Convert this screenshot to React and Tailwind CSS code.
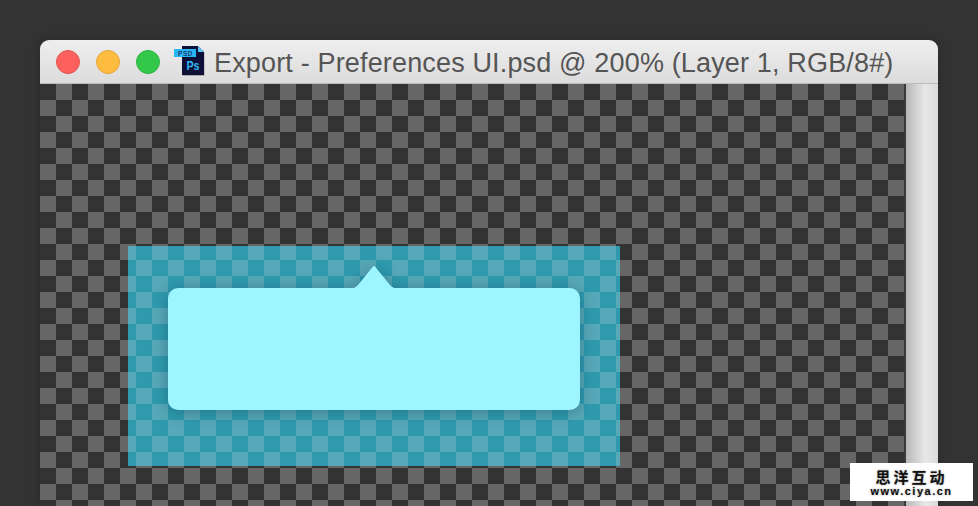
import React from "react";

function PsIcon() {
  return (
    <svg width="32" height="32" viewBox="0 0 32 32" className="shrink-0">
      <path d="M8.5 2H25L30.5 8V31H8.5Z" fill="#000" opacity="0.25" />
      <path d="M8 1H24L30 7V30H8Z" fill="#0f1038" />
      <path d="M24 1L30 7H24Z" fill="#5cc8f5" />
      <rect x="0" y="4" width="22" height="8" fill="#29b6f6" />
      <text x="4" y="10.5" fontFamily="'Liberation Mono', monospace" fontSize="7.5" letterSpacing="0.4" fill="#0f1038">PSD</text>
      <text x="12.5" y="25" fontFamily="'Liberation Sans', sans-serif" fontSize="13.5" fontWeight="700" textLength="13" lengthAdjust="spacingAndGlyphs" fill="#35b8f4">Ps</text>
    </svg>
  );
}

function Dot({ className }) {
  return <div className={`w-6 h-6 rounded-full border ${className}`} />;
}

export default function App() {
  return (
    <div className="relative w-[978px] h-[506px] overflow-hidden bg-[#333333] pt-10 pl-10 font-['Liberation_Sans',sans-serif]">
      <div className="w-[898px] h-[466px] flex flex-col rounded-t-[9px] overflow-hidden shadow-[0_0_10px_rgba(0,0,0,0.25)]">
        {/* title bar */}
        <div className="h-11 shrink-0 flex items-center pl-4 bg-gradient-to-b from-[#eeeeee] to-[#dcdcdc] border-b border-[#b8b8b8]">
          <div className="flex gap-4">
            <Dot className="bg-[#fc615d] border-[#e5534f]" />
            <Dot className="bg-[#fdbc40] border-[#e5a535]" />
            <Dot className="bg-[#34c84a] border-[#2db340]" />
          </div>
          <div className="ml-[14px] mt-[-2px]">
            <PsIcon />
          </div>
          <span className="ml-2 mt-[3px] text-[27px] leading-none tracking-[0.16px] whitespace-nowrap text-[#555555]">
            Export - Preferences UI.psd @ 200% (Layer 1, RGB/8#)
          </span>
        </div>

        <div className="flex-1 flex min-h-0">
          {/* canvas */}
          <div className="flex-1 bg-[conic-gradient(#666666_25%,#333333_0_50%,#666666_0_75%,#333333_0)] bg-[length:32px_32px] pl-[88px] pt-[162px]">
            <div className="w-[492px] h-[220px] overflow-hidden bg-[conic-gradient(#57a8b8_25%,#2f9aae_0_50%,#57a8b8_0_75%,#2f9aae_0)] bg-[length:32px_32px] bg-[position:8px_30px] pl-10 pt-[19px]">
              <div className="relative w-[412px] drop-shadow-[0_2px_8px_rgba(10,60,80,0.4)]">
                <svg width="60" height="24" viewBox="0 0 60 24" className="block ml-[176px]">
                  <path d="M4 24C9 24 11.5 22.5 14 20L29 1.5Q30 0.7 31 1.5L46 20C48.5 22.5 51 24 56 24Z" fill="#9cf5ff" />
                </svg>
                <div className="h-[122px] mt-[-1px] rounded-[10px] bg-[#9cf5ff]" />
              </div>
            </div>
          </div>
          {/* scrollbar */}
          <div className="w-[34px] shrink-0 border-l-2 border-[#3a3a3a] bg-gradient-to-r from-[#b8b8b8] via-[#e8e8e8] via-60% to-[#dadada]" />
        </div>
      </div>

      {/* watermark */}
      <div className="absolute left-[850px] top-[463px] w-[123px] h-[38px] bg-white flex flex-col items-center justify-center text-[#111111] [text-shadow:0_0_2px_#888888]">
        <div className="text-[15px] leading-[17px] font-bold tracking-[3px] font-['Noto_Sans_CJK_SC',sans-serif]">思洋互动</div>
        <div className="text-[11px] leading-3 font-bold tracking-[1.5px] font-['Liberation_Sans',sans-serif]">www.ciya.cn</div>
      </div>
    </div>
  );
}
